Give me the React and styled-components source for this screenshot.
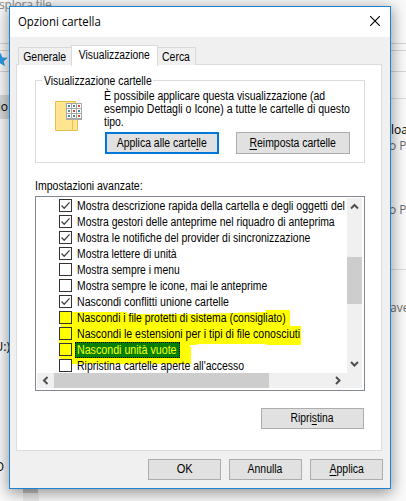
import React from 'react';
import styled, { createGlobalStyle } from 'styled-components';

const Global = createGlobalStyle`
  *{box-sizing:border-box}
  body{margin:0;overflow:hidden;background:#fafafa}
`;
const Desktop = styled.main`
  position:relative;width:406px;height:501px;overflow:hidden;background:#fafafa;
  padding:6px 15px 12px 9px;
  font:12px/13px "Liberation Sans",Arial,sans-serif;color:#000;
`;
const Behind = styled.div`
  position:absolute;left:${p => p.$x}px;top:${p => p.$y}px;width:${p => p.$w}px;height:${p => p.$h}px;
  background:${p => p.$c};
`;
const BehindText = styled.span`
  position:absolute;top:${p => p.$y}px;white-space:nowrap;color:${p => p.$c || '#000'};
  ${p => (p.$right !== undefined ? `right:${p.$right}px` : `left:${p.$x}px`)};
  font:12px/16px "Open Sans",sans-serif;letter-spacing:${p => p.$ls || 0}px;
`;
const Star = styled.svg`position:absolute;left:-7px;top:52px;`;
/* Condensed run of text, narrowed around its anchor side. */
const Text = styled.span`
  display:inline-block;white-space:nowrap;transform:scaleX(${p => p.$sx || 0.87});
  transform-origin:${p => (p.$center ? 'center' : 'left')} center;
`;
const Dialog = styled.section`
  position:relative;width:382px;height:483px;border:1px solid #1e82d2;background:#f0f0f0;
  box-shadow:0 3px 14px 1px rgba(0,0,0,.42);
  display:flex;flex-direction:column;
`;
const TitleBar = styled.header`
  height:30px;flex:none;background:#fff;display:flex;align-items:center;justify-content:space-between;
  padding:0 10px 0 8px;font:12.2px/16px "Open Sans",sans-serif;
`;
const CloseIcon = styled.svg`margin-top:-2px;`;
const TabStrip = styled.nav`
  height:28px;flex:none;padding-left:8px;display:flex;align-items:flex-end;position:relative;
`;
const Tab = styled.div`
  width:${p => p.$w}px;height:${p => (p.$active ? 21 : 18)}px;
  background:${p => (p.$active ? '#fff' : '#f0f0f0')};
  border:1px solid #d9d9d9;border-bottom:0;margin-left:${p => p.$ml || 0}px;
  margin-bottom:${p => (p.$active ? -1 : 0)}px;z-index:${p => (p.$active ? 1 : 0)};
  display:flex;justify-content:center;line-height:18px;
`;
const Page = styled.div`
  width:366px;height:387px;flex:none;margin:-1px 0 0 6px;border:1px solid #dcdcdc;background:#fff;
  padding:15px 16px 0 18px;display:flex;flex-direction:column;
`;
const Group = styled.section`
  width:330px;height:83px;border:1px solid #dcdcdc;display:flex;position:relative;flex:none;
`;
const Legend = styled.div`
  position:absolute;left:6px;top:-6px;width:111px;padding-left:2px;background:#fff;
`;
const FolderIcon = styled.svg`flex:none;margin:20px 0 0 19px;`;
const GroupBody = styled.div`margin:9px 0 0 22px;`;
const Line = styled.div`height:13px;margin-left:-1px;`;
const ButtonRow = styled.div`display:flex;gap:17px;margin-top:3px;`;
const Button = styled.button`
  width:${p => p.$w}px;height:${p => p.$h || 21}px;padding:0;background:#e1e1e1;
  border:${p => (p.$focus ? '2px solid #0078d7' : '1px solid #adadad')};
  font:inherit;color:#000;display:flex;align-items:center;justify-content:center;
`;
const Key = styled.span`text-decoration:underline;text-underline-offset:2px;text-decoration-thickness:1px;`;
const ListLabel = styled.div`margin-top:17px;height:16px;flex:none;`;
const ListBox = styled.div`
  width:330px;height:195px;flex:none;border:1px solid #828790;padding:1px;
  display:grid;grid-template-columns:310px 15px;grid-template-rows:175px 15px;
`;
const Items = styled.div`overflow:hidden;position:relative;`;
const Item = styled.div`height:16px;padding-left:22px;display:flex;position:relative;`;
const Check = styled.span`
  width:13px;height:13px;flex:none;margin:1px 3px 0 0;border:1px solid #333;
  background:${p => (p.$hl ? '#ff0' : '#fff')};display:flex;
`;
const Label = styled.span`
  height:16px;line-height:16px;padding-left:2px;flex:none;width:${p => (p.$sel ? '105px' : 'auto')};
  ${p => p.$sel && 'background:#008000;color:#ff0;outline:1px dotted #002;outline-offset:-1px;'}
`;
const Marker = styled.svg`position:absolute;left:0;top:0;`;
const VBar = styled.div`
  background:#f0f0f0;display:flex;flex-direction:column;align-items:center;padding-bottom:1px;
`;
const VThumb = styled.div`width:15px;height:47px;background:#cdcdcd;margin:42px 0 auto;`;
const HBar = styled.div`
  grid-column:1 / 3;background:#f0f0f0;display:flex;align-items:center;
`;
const HThumb = styled.div`width:215px;height:15px;background:#cdcdcd;margin-right:60px;`;
const ResetRow = styled.div`display:flex;justify-content:flex-end;padding:17px 1px 0 0;width:330px;`;
const Footer = styled.footer`display:flex;justify-content:flex-end;gap:8px;padding:8px 7px 0 0;`;

const paths = { up: 'M4 9.500 7.500 6 11 9.500', down: 'M4 6 7.500 9.500 11 6', left: 'M9.500 4 6 7.500 9.500 11', right: 'M6 4 9.500 7.500 6 11' };
const ArrowIcon = styled.svg`flex:none;display:block;`;
const Arrow = ({ dir }) => (
  <ArrowIcon width="17" height="17" viewBox="-1 -1 17 17"><path d={paths[dir]} fill="none" stroke="#505050" strokeWidth="2" /></ArrowIcon>
);
const rows = [
  ['Mostra descrizione rapida della cartella e degli oggetti del', true, .877],
  ['Mostra gestori delle anteprime nel riquadro di anteprima', true, .866],
  ['Mostra le notifiche del provider di sincronizzazione', true, .87],
  ['Mostra lettere di unità', true, .863],
  ['Mostra sempre i menu', false, .86],
  ['Mostra sempre le icone, mai le anteprime', false, .864],
  ['Nascondi conflitti unione cartelle', true, .883],
  ['Nascondi i file protetti di sistema (consigliato)', false, .869],
  ['Nascondi le estensioni per i tipi di file conosciuti', false, .88],
  ['Nascondi unità vuote', false, .888],
  ['Ripristina cartelle aperte all\'accesso', false, .875],
];

export default function App() {
  return (
    <Desktop>
      <Global />
      <BehindText $x={-1} $y={-3} $c="#8c8c8c" $ls={-.2}>splora file</BehindText>
      <Behind $x={0} $y={43} $w={406} $h={1} $c="#d5d5d5" />
      <Behind $x={0} $y={50} $w={406} $h={1} $c="#d5d5d5" />
      <Behind $x={0} $y={71} $w={406} $h={1} $c="#d5d5d5" />
      <Behind $x={391} $y={98} $w={15} $h={1} $c="#dcdcdc" />
      <Behind $x={391} $y={269} $w={15} $h={1} $c="#dcdcdc" />
      <Behind $x={0} $y={95} $w={9} $h={24} $c="#d9d9d9" />
      <Behind $x={23} $y={485} $w={15} $h={8} $c="#c4c4c4" />
      <Behind $x={23} $y={493} $w={16} $h={8} $c="#ebebeb" />
      <Star width="15" height="15" viewBox="0 0 24 24"><path fill="#2b9be5" d="m12 1 3.200 7.600 8.300.7-6.300 5.300 2 8.100L12 18.300l-7.200 4.400 2-8.100L.5 9.300l8.300-.7z" /></Star>
      <BehindText $right={398} $y={99}>lo</BehindText>
      <BehindText $right={396} $y={339}>U:)</BehindText>
      <BehindText $right={402} $y={459}>O</BehindText>
      <BehindText $x={391} $y={122}>load</BehindText>
      <BehindText $x={389} $y={138} $c="#6d6d6d">o PC</BehindText>
      <BehindText $x={389} $y={202} $c="#6d6d6d">o PC</BehindText>
      <BehindText $x={390} $y={300} $c="#6d6d6d">ave</BehindText>
      <Dialog>
        <TitleBar>
          <Text $sx={.935}>Opzioni cartella</Text>
          <CloseIcon width="10" height="10" viewBox="0 0 10 10"><path d="m0 0 10 10M10 0 0 10" stroke="#000" strokeWidth="1.1" /></CloseIcon>
        </TitleBar>
        <TabStrip>
          <Tab $w={54}><Text $center>Generale</Text></Tab>
          <Tab $w={87} $ml={-1} $active><Text $center $sx={.86}>Visualizzazione</Text></Tab>
          <Tab $w={39} $ml={-1}><Text $center>Cerca</Text></Tab>
        </TabStrip>
        <Page>
          <Group>
            <Legend><Text $sx={.865}>Visualizzazione cartelle</Text></Legend>
            <FolderIcon width="28" height="30" viewBox="0 0 28 30">
              <path d="M.5.500h20v6.500h2v22.500H.5z" fill="#ffe491" stroke="#e6bf4c" />
              <path d="M17.500 18v11" stroke="#e6bf4c" />
              <path d="M11 2h16v17H11z" fill="#a8a8a8" />
              {[3, 8, 13].map(y => [12, 17, 22].map((x, i) => (
                <g key={`${x}-${y}`}>
                  <rect x={x} y={y} width="4" height="4" fill="#fff" />
                  <rect x={x + 1} y={y + 1} width="2" height="2" fill={['#4b88a8', '#5a9180', '#d05040'][(i + (y === 8 ? 1 : 0)) % 3]} />
                </g>
              )))}
            </FolderIcon>
            <GroupBody>
              <Line><Text>È possibile applicare questa visualizzazione (ad</Text></Line>
              <Line><Text $sx={.88}>esempio Dettagli o Icone) a tutte le cartelle di questo</Text></Line>
              <Line><Text>tipo.</Text></Line>
              <ButtonRow>
                <Button $w={114} $h={22} $focus><Text $center>Applica alle carte<Key>l</Key>le</Text></Button>
                <Button $w={114} $h={22}><Text $center><Key>R</Key>eimposta cartelle</Text></Button>
              </ButtonRow>
            </GroupBody>
          </Group>
          <ListLabel><Text $sx={.877}>Impostazioni avanzate:</Text></ListLabel>
          <ListBox>
            <Items>
              <Marker width="310" height="175">
                <path fill="#ff0" d="M24 114H90V116H160L229 114V112H253V128H264V147H229V146H160V147H153V149H154V166H24V160H22V130H24z" />
              </Marker>
              {rows.map(([t, on, sx], i) => (
                <Item key={t}>
                  <Check $hl={i > 6 && i < 10}>
                    {on && <svg width="11" height="11" viewBox="0 0 11 11"><path d="m1.500 5.500 2.700 2.700 5.300-5.800" fill="none" stroke="#444" strokeWidth="1.300" /></svg>}
                  </Check>
                  <Label $sel={i === 9}><Text $sx={sx}>{t}</Text></Label>
                </Item>
              ))}
            </Items>
            <VBar><Arrow dir="up" /><VThumb /><Arrow dir="down" /></VBar>
            <HBar><Arrow dir="left" /><HThumb /><Arrow dir="right" /></HBar>
          </ListBox>
          <ResetRow><Button $w={103}><Text $center $sx={.86}>Ripri<Key>s</Key>tina</Text></Button></ResetRow>
        </Page>
        <Footer>
          <Button $w={73}><Text $center $sx={.92}>OK</Text></Button>
          <Button $w={73}><Text $center>Annulla</Text></Button>
          <Button $w={73}><Text $center><Key>A</Key>pplica</Text></Button>
        </Footer>
      </Dialog>
    </Desktop>
  );
}
